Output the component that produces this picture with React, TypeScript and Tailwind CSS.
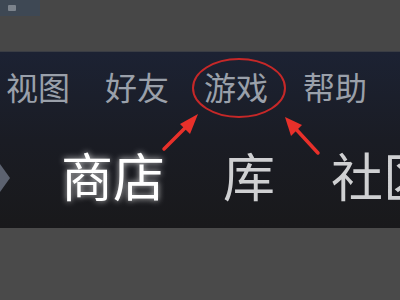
const cjk = { fontFamily: '"Noto Sans CJK SC", "Noto Sans", sans-serif' };

export default function App() {
  return (
    <div className="relative w-[400px] h-[300px] overflow-hidden flex flex-col bg-[#494949]" style={cjk}>
      {/* top window strip */}
      <div className="h-[52px] bg-[#474747] border-b border-[#3a3d44]">
        <div className="w-[40px] h-[16px] bg-[#3e4854] flex items-center pl-[8px]">
          <div className="w-[8px] h-[6px] bg-[#7c838c] rounded-[1px]" />
        </div>
      </div>

      {/* steam header */}
      <div className="h-[176px] bg-gradient-to-b from-[#1c2233] via-[#1a1c24] to-[#19191b] flex flex-col">
        <div className="flex items-center gap-[35px] pl-[6px] pt-[16px] text-[32px] leading-[36px] text-[#9aa0aa] whitespace-nowrap">
          <span>视图</span>
          <span>好友</span>
          <span>游戏</span>
          <span>帮助</span>
        </div>
        <div className="flex items-center mt-[43px] text-[52px] leading-[56px] whitespace-nowrap">
          <svg width="12" height="32" viewBox="0 0 12 32" className="mr-[49px] mt-[6px] shrink-0">
            <path d="M0 2 L10 16 L0 30 Z" fill="#5c6270" />
          </svg>
          <span className="shrink-0 text-white [text-shadow:0_0_6px_rgba(255,255,255,0.8)]">商店</span>
          <span className="shrink-0 ml-[58px] text-[#cfd0d2]">库</span>
          <span className="shrink-0 ml-[56px] text-[#cfd0d2]">社区</span>
        </div>
      </div>

      <div className="flex-1 bg-[#4a4a4a]" />

      {/* annotation */}
      <svg className="absolute inset-0 pointer-events-none" width="400" height="300" viewBox="0 0 400 300">
        <ellipse cx="239" cy="88" rx="46" ry="29" fill="none" stroke="#c62828" strokeWidth="2" />
        <line x1="164" y1="149" x2="188" y2="125" stroke="#e8302a" strokeWidth="3.5" strokeLinecap="round" />
        <path d="M198 114 L180 124 L190 134 Z" fill="#e8302a" />
        <line x1="318" y1="153" x2="294" y2="127" stroke="#e8302a" strokeWidth="3.5" strokeLinecap="round" />
        <path d="M285 117 L291 136 L302 125 Z" fill="#e8302a" />
      </svg>
    </div>
  );
}
